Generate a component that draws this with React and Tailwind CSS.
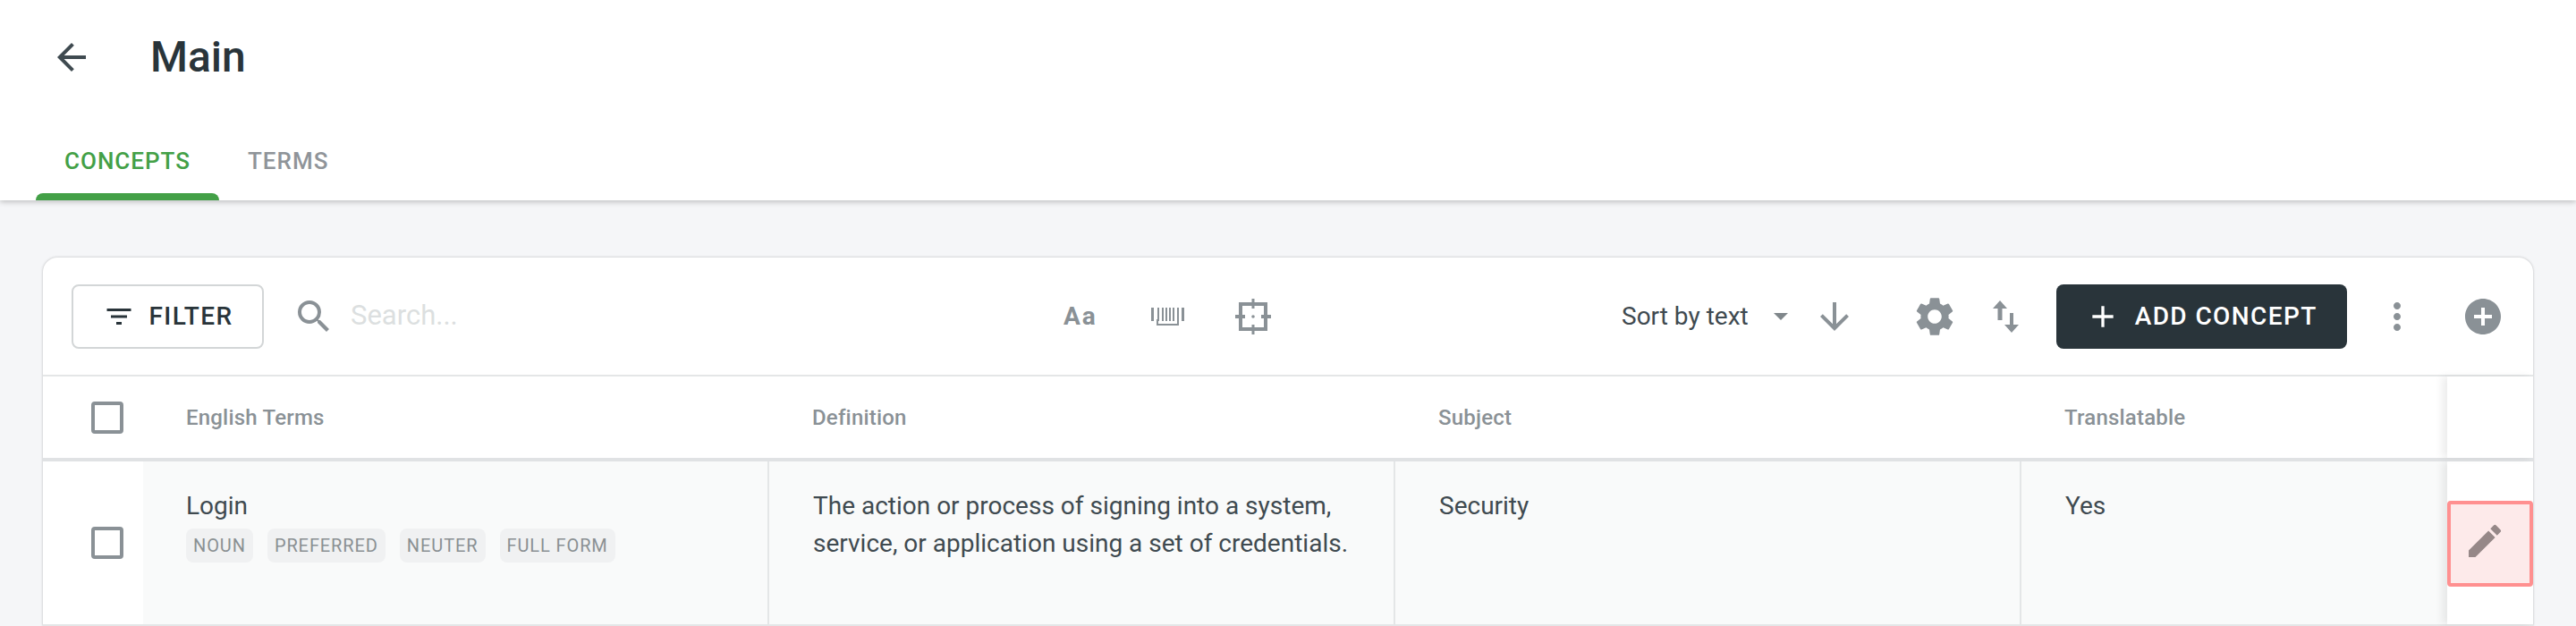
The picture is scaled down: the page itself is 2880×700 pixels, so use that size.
import React from "react";
import { MdFilterList, MdSearch, MdSettings, MdMoreVert, MdEdit, MdArrowDownward, MdAdd, MdAddCircle, MdArrowBack } from "react-icons/md";

const roboto = { fontFamily: "Roboto, sans-serif" };

function Tag({ children }) {
  return (
    <span className="h-[38px] px-[8px] rounded-[8px] bg-[#f0f1f2] text-[#8a9093] text-[20px] leading-[38px] tracking-[0.9px]">
      {children}
    </span>
  );
}

function Check() {
  return <span className="block w-[36px] h-[36px] rounded-[4px] border-[4px] border-[#8a9196] bg-white" />;
}

function BarcodeIcon() {
  return (
    <svg width="37" height="20" viewBox="0 0 37 20" fill="#8a9196">
      <rect x="0" y="0" width="3" height="15" />
      <rect x="7" y="0" width="2" height="15" />
      <rect x="12" y="0" width="2" height="15" />
      <rect x="16" y="0" width="2" height="15" />
      <rect x="20" y="0" width="2" height="15" />
      <rect x="24" y="0" width="2" height="15" />
      <rect x="29" y="0" width="2" height="15" />
      <rect x="34" y="0" width="3" height="15" />
      <path d="M6 13h2v5h21v-5h2v7H6z" />
    </svg>
  );
}

function FrameIcon() {
  return (
    <svg width="40" height="40" viewBox="0 0 40 40" fill="#8a9196">
      <path d="M4 4h32v32H4zM8 8v24h24V8z" fillRule="evenodd" />
      <rect x="18.500" y="0" width="3" height="11" />
      <rect x="18.500" y="29" width="3" height="11" />
      <rect x="0" y="18" width="11" height="4" />
      <rect x="29" y="18" width="11" height="4" />
      <circle cx="20" cy="20" r="1.800" />
    </svg>
  );
}

function SwapIcon() {
  return (
    <svg width="29" height="36" viewBox="0 0 29 36" fill="#8a9196">
      <path d="M8 0l8 9h-5.500v13h-5V9H0z" />
      <path d="M21 36l8-9h-6V14h-4v13h-6z" />
    </svg>
  );
}

const cellText = "text-[28px] leading-[42px] text-[#3f4a50]";

export default function App() {
  return (
    <div style={roboto} className="w-[2880px] h-[700px] overflow-hidden bg-[#f5f6f8]">
      <header className="h-[224px] bg-white shadow-[0_2px_6px_rgba(0,0,0,0.22)] relative flex flex-col">
        <div className="flex items-center h-[128px] pl-[56px]">
          <MdArrowBack size={48} className="text-[#3f4a50]" />
          <h1 className="ml-[64px] text-[48px] leading-[56px] font-medium text-[#29343a]">Main</h1>
        </div>
        <nav className="flex pl-[40px] h-[96px]">
          <div className="w-[205px] flex flex-col items-center">
            <span className="mt-[36px] text-[26px] leading-[32px] font-medium tracking-[1px] text-[#43a047]">CONCEPTS</span>
            <span className="mt-auto h-[8px] w-full rounded-t-[8px] bg-[#43a047]" />
          </div>
          <span className="ml-[32px] mt-[36px] text-[26px] leading-[32px] font-medium tracking-[1px] text-[#8f9499]">TERMS</span>
        </nav>
      </header>

      <main className="mt-[64px] mx-[48px] bg-white rounded-t-[16px] shadow-[0_0_3px_rgba(0,0,0,0.25)] h-[412px] overflow-hidden">
        <div className="h-[133px] flex items-center pl-[32px] border-b-[2px] border-[#e4e6e7]">
          <button className="w-[215px] h-[72px] rounded-[8px] border-[2px] border-[#d3d6d7] flex items-center justify-center gap-[16px] text-[#29343a] text-[28px] font-medium tracking-[1.4px]">
            <MdFilterList size={36} />
            <span>FILTER</span>
          </button>
          <MdSearch size={48} className="ml-[32px] text-[#8a9196]" />
          <span className="ml-[17px] w-[797px] text-[31px] text-[#dcdfe0]">Search...</span>
          <span className="w-[37px] text-[28px] font-bold tracking-[2px] text-[#8a9196]">Aa</span>
          <span className="ml-[61px]"><BarcodeIcon /></span>
          <span className="ml-[57px]"><FrameIcon /></span>
          <span className="ml-[392px] text-[28px] text-[#3f4a50]">Sort by text</span>
          <span className="ml-[28px] w-0 h-0 border-x-[8px] border-t-[8px] border-x-transparent border-t-[#80878b]" />
          <MdArrowDownward size={48} className="ml-[28px] text-[#8a9196]" />
          <MdSettings size={52} className="ml-[62px] text-[#8a9196]" />
          <span className="ml-[39px]"><SwapIcon /></span>
          <button className="ml-[42px] w-[325px] h-[72px] rounded-[8px] bg-[#29343a] text-white flex items-center pl-[32px] text-[28px] font-medium tracking-[1.4px]">
            <MdAdd size={40} />
            <span className="ml-[16px]">ADD CONCEPT</span>
          </button>
          <MdMoreVert size={48} className="ml-[32px] text-[#8a9196]" />
          <MdAddCircle size={48} className="ml-[48px] text-[#8a9196]" />
        </div>

        <div className="flex h-[95px] border-b-[4px] border-[#e0e2e4] relative">
          <div className="w-[112px] pl-[54px] flex items-center"><Check /></div>
          {["English Terms", "Definition", "Subject", "Translatable"].map((t, i) => (
            <div key={t} className={(i === 3 ? "w-[476px]" : "w-[700px]") + " pl-[48px] flex items-center text-[24px] font-medium tracking-[0.2px] text-[#8a9196]"}>{t}</div>
          ))}
          <div className="w-[96px] bg-white shadow-[-6px_0_8px_rgba(0,0,0,0.07)]" />
        </div>

        <div className="flex h-[184px] border-b-[2px] border-[#e4e6e7]">
          <div className="w-[112px] pl-[54px] pt-[73px] bg-white"><Check /></div>
          <div className="w-[700px] pl-[48px] pt-[29px] bg-[#f9fafa] border-r-[2px] border-[#e4e6e7]">
            <div className={cellText}>Login</div>
            <div className="flex gap-[16px] mt-[4px]">
              <Tag>NOUN</Tag>
              <Tag>PREFERRED</Tag>
              <Tag>NEUTER</Tag>
              <Tag>FULL FORM</Tag>
            </div>
          </div>
          <div className={"w-[700px] pl-[49px] pt-[29px] pr-[30px] bg-[#f9fafa] border-r-[2px] border-[#e4e6e7] " + cellText}>
            The action or process of signing into a system, service, or application using a set of credentials.
          </div>
          <div className={"w-[700px] pl-[49px] pt-[29px] bg-[#f9fafa] border-r-[2px] border-[#e4e6e7] " + cellText}>Security</div>
          <div className={"w-[476px] pl-[49px] pt-[29px] bg-[#f9fafa] " + cellText}>Yes</div>
          <div className="w-[96px] pt-[2px] bg-white flex items-center shadow-[-6px_0_8px_rgba(0,0,0,0.07)]">
            <button className="w-[96px] h-[96px] pr-[13px] pb-[6px] rounded-[4px] border-[4px] border-[#ff9090] bg-[#fdeaea] flex items-center justify-center">
              <MdEdit size={48} className="text-[#968888]" />
            </button>
          </div>
        </div>
      </main>
    </div>
  );
}
